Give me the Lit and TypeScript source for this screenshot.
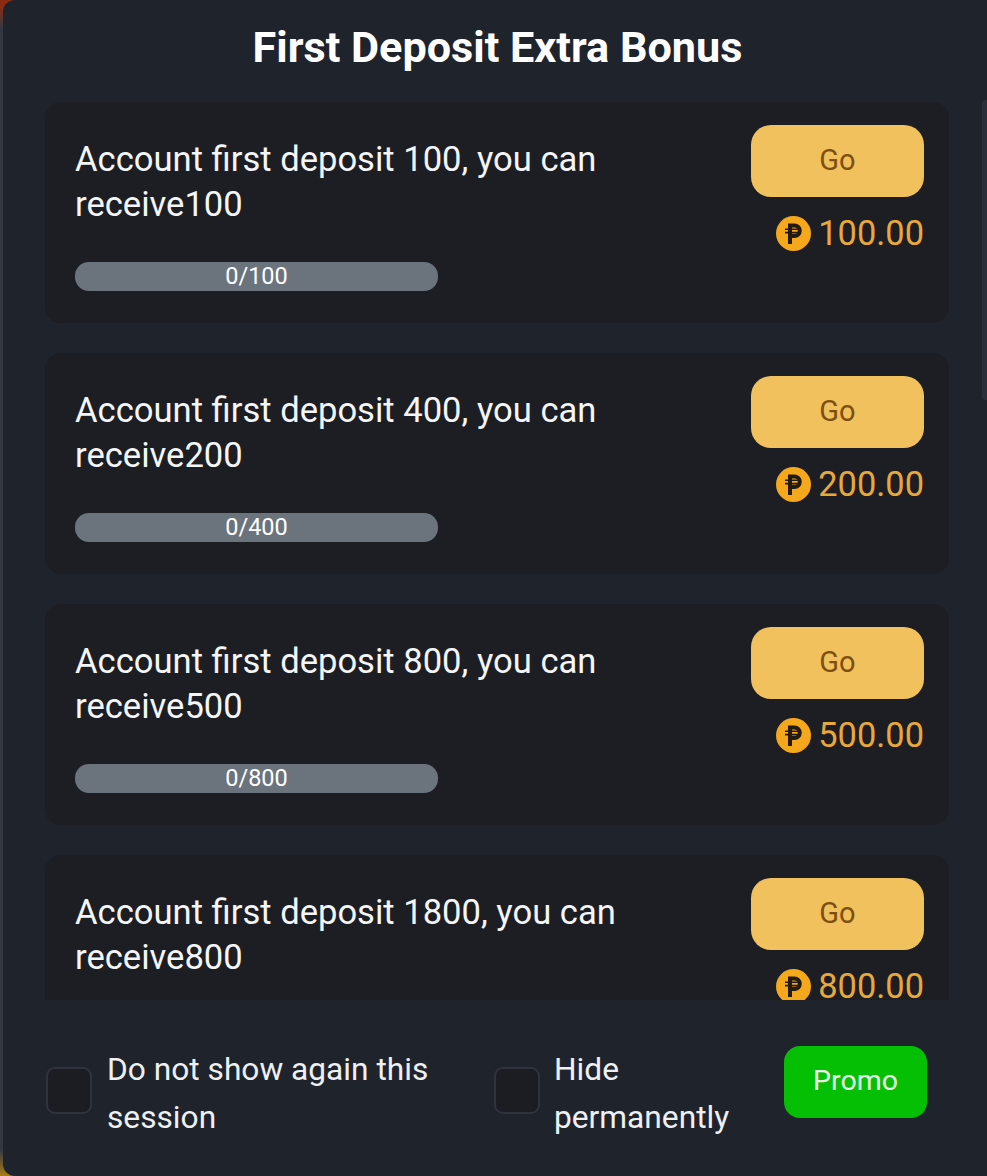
import { LitElement, html, css } from "lit";
import { customElement } from "lit/decorators.js";

const rows = [
  { dep: 100, get: 100 },
  { dep: 400, get: 200 },
  { dep: 800, get: 500 },
  { dep: 1800, get: 800 },
];

@customElement("app-root")
export class AppRoot extends LitElement {
  static styles = css`
    :host {
      display: block;
      height: 1176px;
      width: 987px;
      overflow: hidden;
      font-family: Roboto, "Liberation Sans", sans-serif;
      background: linear-gradient(180deg, #8a2c14 0, #8a2c14 6px, #343843 28px, #343843 1150px, #a87c14 1176px);
    }
    .modal {
      position: relative;
      box-sizing: border-box;
      height: 1176px;
      margin-left: 3px;
      border-radius: 12px 0 0 12px;
      background: #1f232c;
      display: flex;
      flex-direction: column;
      overflow: hidden;
    }
    h1 {
      margin: 0;
      height: 102px;
      box-sizing: border-box;
      padding-top: 25px;
      padding-left: 5px;
      line-height: 46px;
      font-size: 43.2px;
      font-weight: 700;
      color: #fff;
      text-align: center;
    }
    .list {
      height: 898px;
      overflow: hidden;
      padding: 0 38px 0 42px;
      display: flex;
      flex-direction: column;
      gap: 30px;
    }
    .card {
      flex: none;
      height: 221px;
      box-sizing: border-box;
      padding: 23px 25px 0 30px;
      border-radius: 16px;
      background: #1d1e23;
      display: flex;
      justify-content: space-between;
    }
    .info { width: 570px; padding-top: 12px; }
    .desc {
      font-size: 34.6px;
      line-height: 45px;
      color: #f4f5f6;
    }
    .bar {
      margin-top: 35px;
      width: 363px;
      height: 29px;
      border-radius: 14px;
      background: #6b737d;
      color: #fff;
      font-size: 23.5px;
      line-height: 29px;
      text-align: center;
    }
    .side {
      width: 173px;
      display: flex;
      flex-direction: column;
      align-items: flex-end;
    }
    .go {
      width: 173px;
      height: 72px;
      border-radius: 20px;
      background: #f1c15d;
      color: #7d4f10;
      font-size: 29px;
      line-height: 70px;
      text-align: center;
    }
    .amount {
      margin-top: 18px;
      display: flex;
      align-items: center;
      gap: 7px;
      height: 36px;
      font-size: 34.4px;
      line-height: 34px;
      color: #e8a83a;
    }
    .coin { width: 35px; height: 35px; display: block; }
    .footer {
      flex: 1;
      display: flex;
      align-items: flex-start;
      padding: 46px 0 0 43px;
    }
    .check {
      display: flex;
      align-items: center;
      font-size: 31.7px;
      line-height: 48px;
      color: #eef0f2;
    }
    .one { width: 448px; gap: 15px; }
    .two { width: 290px; gap: 14px; }
    .box {
      flex: none;
      width: 46px;
      height: 47px;
      margin-bottom: 8px;
      box-sizing: border-box;
      border: 2px solid #2f333e;
      border-radius: 9px;
      background: #1c1d22;
    }
    .promo {
      width: 143px;
      height: 72px;
      border-radius: 16px;
      background: #04bf04;
      color: #e6f8e6;
      font-size: 28.5px;
      line-height: 70px;
      text-align: center;
    }
    .scroll {
      position: absolute;
      right: 0;
      top: 100px;
      width: 5px;
      height: 300px;
      background: #2b2f39;
      border-radius: 3px 0 0 3px;
    }
  `;

  private coin() {
    return html`<svg class="coin" viewBox="0 0 35 35">
      <circle cx="17.5" cy="17.5" r="17.5" fill="#f6a81c"></circle>
      <path d="M14 28V9.5h4.5a5 5 0 0 1 0 10.5H14" fill="none" stroke="#231a10" stroke-width="4"></path>
      <path d="M9 13.2h16M9 16.6h16" fill="none" stroke="#231a10" stroke-width="1.6"></path>
    </svg>`;
  }

  render() {
    return html`<div class="modal">
      <h1>First Deposit Extra Bonus</h1>
      <div class="list">
        ${rows.map(
          (r) => html`<div class="card">
            <div class="info">
              <div class="desc">${`Account first deposit ${r.dep}, you can receive${r.get}`}</div>
              <div class="bar">${`0/${r.dep}`}</div>
            </div>
            <div class="side">
              <div class="go">Go</div>
              <div class="amount">${this.coin()}<span>${`${r.get}.00`}</span></div>
            </div>
          </div>`
        )}
      </div>
      <div class="footer">
        <div class="check one"><div class="box"></div><span>Do not show again this session</span></div>
        <div class="check two"><div class="box"></div><span>Hide permanently</span></div>
        <div class="promo">Promo</div>
      </div>
      <div class="scroll"></div>
    </div>`;
  }
}
